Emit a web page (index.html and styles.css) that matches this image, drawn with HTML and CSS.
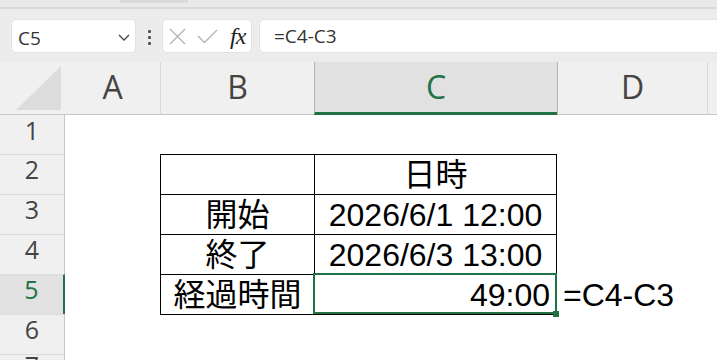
FILE: index.html
```html
<!DOCTYPE html>
<html lang="ja">
<head>
    <meta charset="UTF-8">
    <title>経過時間</title>
    <link rel="stylesheet" href="styles.css">
</head>
<body>
    <div class="topbar"><div class="tab"></div></div>
    <div class="toolbar">
        <div class="namebox">
            <span>C5</span>
            <svg class="chev" width="12" height="7" viewBox="0 0 12 7"><path d="M1 1 L6 6 L11 1" fill="none" stroke="#444" stroke-width="1.3"/></svg>
        </div>
        <div class="dots"><i></i><i></i><i></i></div>
        <div class="fxbox">
            <svg width="17" height="17" viewBox="0 0 17 17"><path d="M1 1 L16 16 M16 1 L1 16" stroke="#b4b4b4" stroke-width="1.4"/></svg>
            <svg class="check" width="21" height="15" viewBox="0 0 21 15"><path d="M1 7 L7.5 13.5 L20 1" fill="none" stroke="#b4b4b4" stroke-width="1.4"/></svg>
            <span class="fx">fx</span>
        </div>
        <div class="formula">=C4-C3</div>
    </div>
    <div class="sheet">
        <div class="ch corner"><div class="tri"></div></div>
        <div class="ch">A</div>
        <div class="ch">B</div>
        <div class="ch sel">C</div>
        <div class="ch dl">D</div>
        <div class="ch"></div>

        <div class="rh first">1</div>
        <div class="c"></div><div class="c"></div><div class="c"></div><div class="c"></div><div class="c"></div>

        <div class="rh">2</div>
        <div class="c"></div>
        <div class="c t"></div>
        <div class="c t r">日時</div>
        <div class="c"></div><div class="c"></div>

        <div class="rh">3</div>
        <div class="c"></div>
        <div class="c t">開始</div>
        <div class="c t r">2026/6/1 12:00</div>
        <div class="c"></div><div class="c"></div>

        <div class="rh">4</div>
        <div class="c"></div>
        <div class="c t">終了</div>
        <div class="c t r">2026/6/3 13:00</div>
        <div class="c"></div><div class="c"></div>

        <div class="rh sel">5</div>
        <div class="c"></div>
        <div class="c t">経過時間</div>
        <div class="c t r num active">49:00</div>
        <div class="c left">=C4-C3</div>
        <div class="c"></div>

        <div class="rh">6</div>
        <div class="c"></div>
        <div class="c tb"></div>
        <div class="c tb"></div>
        <div class="c"></div><div class="c"></div>

        <div class="rh last">7</div>
        <div class="c"></div><div class="c"></div><div class="c"></div><div class="c"></div><div class="c"></div>
    </div>
</body>
</html>
```

FILE: styles.css
```css
body { margin: 0; height: 360px; overflow: hidden; background: #fff; font-family: "Open Sans", "Noto Sans", sans-serif; }

.topbar { height: 7px; background: #e9e9e9; border-bottom: 2px solid #d9d9d9; }
.tab { margin-left: 120px; width: 68px; height: 3px; background: #d9d9d9; }

.toolbar { height: 53px; background: #ececec; display: flex; align-items: flex-start; padding: 10px 0 0 11px; box-sizing: border-box; overflow: hidden; }
.namebox, .fxbox, .formula { height: 34px; background: #fff; border: 1px solid #e2e2e2; border-radius: 5px; box-sizing: border-box; display: flex; align-items: center; }
.namebox { width: 125px; padding-left: 6px; font-size: 19px; color: #333; }
.namebox span { padding-top: 3px; }
.chev { margin-left: auto; margin-right: 5px; margin-top: 2px; }
.dots { display: flex; flex-direction: column; gap: 3px; margin: 11px 11px 0 12px; }
.dots i { width: 3px; height: 3px; background: #555; border-radius: 1px; }
.fxbox { width: 90px; padding-left: 6px; }
.check { margin-left: 11px; margin-top: 1px; }
.fx { margin-left: 12px; font-family: "Liberation Serif", serif; font-style: italic; font-size: 24px; color: #222; letter-spacing: -1px; }
.formula { flex: 1; margin-left: 7px; margin-right: -10px; padding-left: 14px; font-size: 19px; color: #333; }

.sheet { display: grid; grid-template-columns: 65px 95px 154px 243px 150px 1fr; grid-template-rows: 53px 39px repeat(5, 40px) 6px; }

.ch { background: #f0f0f0; border-bottom: 1px solid #c6c6c6; border-left: 1px solid #dadada; display: flex; align-items: center; justify-content: center; padding-bottom: 4px; font-size: 32px; color: #444; }
.ch.corner, .ch.corner + .ch { border-left: none; }
.ch.sel { background: #e1e1e1; border-bottom: 3px solid #217346; border-left-color: #b4b4b4; color: #217346; padding-bottom: 2px; }
.ch.dl { border-left-color: #b4b4b4; }
.corner { position: relative; }
.tri { position: absolute; left: 16px; top: 4px; width: 45px; height: 44px; background: #dcdcdc; clip-path: polygon(100% 0, 100% 100%, 0 100%); }

.rh { background: #f0f0f0; border-right: 1px solid #c6c6c6; border-top: 1px solid #dcdcdc; display: flex; justify-content: center; align-items: flex-start; padding-top: 4px; font-size: 25px; line-height: 20px; color: #444; }
.rh.first { border-top: none; padding-top: 5px; }
.rh.last { padding-top: 0; }
.rh.sel { background: #e1e1e1; border-right: 2px solid #217346; color: #217346; }

.c { display: flex; align-items: flex-end; justify-content: center; padding-bottom: 3px; white-space: nowrap; font-family: "Liberation Sans", "Noto Sans CJK JP", sans-serif; font-size: 32px; line-height: 32px; color: #000; }
.c.t { border-top: 1px solid #000; border-left: 1px solid #000; }
.c.r { border-right: 1px solid #000; }
.c.tb { border-top: 1px solid #000; }
.c.num { justify-content: flex-end; padding-right: 6px; }
.c.left { justify-content: flex-start; padding-left: 6px; }

.active { position: relative; }
.active::after { content: ""; position: absolute; left: -2px; top: -2px; right: -1px; bottom: 0; border: 2px solid #217346; }
.active::before { content: ""; position: absolute; right: -3px; bottom: -3px; width: 6px; height: 6px; background: #217346; z-index: 1; }
```
